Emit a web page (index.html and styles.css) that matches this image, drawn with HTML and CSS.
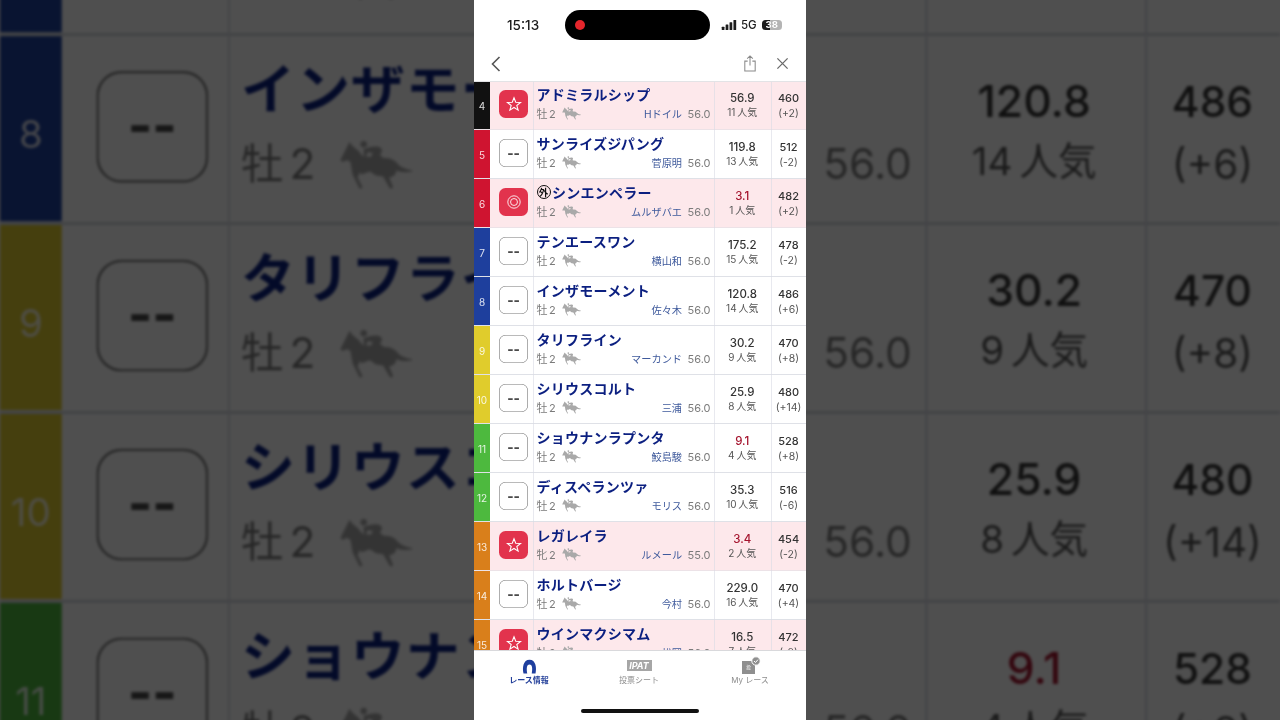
FILE: index.html
```html
<!DOCTYPE html>
<html lang="ja">
<head>
<meta charset="utf-8">
<title>レース情報</title>
<link rel="stylesheet" href="styles.css">
</head>
<body>
<svg class="defs" aria-hidden="true">
  <defs>
    <symbol id="horse" viewBox="0 0 72 48">
      <path d="M1 19 L8 5 L10 1 L13 5 Q19 9 23 15 L42 17 Q52 16 57 22 Q60 27 72 29 L72 30 Q62 32 56 29 Q56 35 49 36 L53 46 L50 47 L43 35 L36 34 L30 30 L22 33 L20 31 L18 36 L23 46 L20 47 L13 33 L11 21 Q7 17 4 21 Z"/>
      <circle cx="24" cy="3.4" r="3.2"/>
      <path d="M24 8 L31 6 Q42 4 42 10 L40 14 L44 17 L30 18 L33 12 L28 11 L26 16 L24 15 Z"/>
    </symbol>
    <symbol id="star" viewBox="0 0 24 24">
      <path d="M12 2.6 L14.6 9.4 L21.9 9.7 L16.2 14.2 L18.2 21.2 L12 17.2 L5.8 21.2 L7.8 14.2 L2.1 9.7 L9.4 9.4 Z" fill="none" stroke="currentColor" stroke-width="1.6" stroke-linejoin="miter"/>
    </symbol>
    <symbol id="circle2" viewBox="0 0 24 24">
      <circle cx="12" cy="12" r="9.3" fill="none" stroke="currentColor" stroke-width="1.3"/>
      <circle cx="12" cy="12" r="5.2" fill="none" stroke="currentColor" stroke-width="1.3"/>
    </symbol>
  </defs>
</svg>

<div class="backdrop-clip" aria-hidden="true">
  <div class="backdrop">
    <div class="row"><div class="band blue">7</div><div class="mark"><span class="box">--</span></div><div class="info"><div class="name">テンエースワン</div><div class="sub"><span class="sex">牡 2</span><svg class="horse"><use href="#horse"/></svg><span class="jockey">横山和</span><span class="kg">56.0</span></div></div><div class="odds"><b>175.2</b><span>15 人気</span></div><div class="weight"><b>478</b><span>(-2)</span></div></div>
    <div class="row"><div class="band blue">8</div><div class="mark"><span class="box">--</span></div><div class="info"><div class="name">インザモーメント</div><div class="sub"><span class="sex">牡 2</span><svg class="horse"><use href="#horse"/></svg><span class="jockey">佐々木</span><span class="kg">56.0</span></div></div><div class="odds"><b>120.8</b><span>14 人気</span></div><div class="weight"><b>486</b><span>(+6)</span></div></div>
    <div class="row"><div class="band yellow">9</div><div class="mark"><span class="box">--</span></div><div class="info"><div class="name">タリフライン</div><div class="sub"><span class="sex">牡 2</span><svg class="horse"><use href="#horse"/></svg><span class="jockey">マーカンド</span><span class="kg">56.0</span></div></div><div class="odds"><b>30.2</b><span>9 人気</span></div><div class="weight"><b>470</b><span>(+8)</span></div></div>
    <div class="row"><div class="band yellow">10</div><div class="mark"><span class="box">--</span></div><div class="info"><div class="name">シリウスコルト</div><div class="sub"><span class="sex">牡 2</span><svg class="horse"><use href="#horse"/></svg><span class="jockey">三浦</span><span class="kg">56.0</span></div></div><div class="odds"><b>25.9</b><span>8 人気</span></div><div class="weight"><b>480</b><span>(+14)</span></div></div>
    <div class="row"><div class="band green">11</div><div class="mark"><span class="box">--</span></div><div class="info"><div class="name">ショウナンラプンタ</div><div class="sub"><span class="sex">牡 2</span><svg class="horse"><use href="#horse"/></svg><span class="jockey">鮫島駿</span><span class="kg">56.0</span></div></div><div class="odds"><b class="hot">9.1</b><span>4 人気</span></div><div class="weight"><b>528</b><span>(+8)</span></div></div>
  </div>
</div>

<main class="phone">
  <header class="status">
    <span class="time">15:13</span>
    <div class="island"><span class="rec"></span></div>
    <div class="indicators">
      <svg class="signal" viewBox="0 0 16 11"><rect x="0" y="7.5" width="3" height="3.5" rx=".6"/><rect x="4.3" y="5" width="3" height="6" rx=".6"/><rect x="8.6" y="2.5" width="3" height="8.5" rx=".6"/><rect x="12.9" y="0" width="3" height="11" rx=".6"/></svg>
      <span class="net">5G</span>
      <span class="battery">38</span>
    </div>
  </header>
  <nav class="topbar">
    <svg class="chevron" viewBox="0 0 12 18"><path d="M9.5 2 L2.5 9 L9.5 16"/></svg>
    <div class="actions">
      <svg class="share" viewBox="0 0 14 18"><path d="M4.5 6.5 H1.5 V17 H12.5 V6.5 H9.5 M7 11 V1 M4 3.8 L7 1 L10 3.8"/></svg>
      <svg class="close" viewBox="0 0 14 14"><path d="M1.5 1.5 L12.5 12.5 M12.5 1.5 L1.5 12.5"/></svg>
    </div>
  </nav>
  <section class="list">
    <div class="rows">
    <div class="row pink"><div class="band black">4</div><div class="mark"><span class="box on"><svg class="glyph"><use href="#star"/></svg></span></div><div class="info"><div class="name">アドミラルシップ</div><div class="sub"><span class="sex">牡 2</span><svg class="horse"><use href="#horse"/></svg><span class="jockey">Hドイル</span><span class="kg">56.0</span></div></div><div class="odds"><b>56.9</b><span>11 人気</span></div><div class="weight"><b>460</b><span>(+2)</span></div></div>
    <div class="row"><div class="band red">5</div><div class="mark"><span class="box">--</span></div><div class="info"><div class="name">サンライズジパング</div><div class="sub"><span class="sex">牡 2</span><svg class="horse"><use href="#horse"/></svg><span class="jockey">菅原明</span><span class="kg">56.0</span></div></div><div class="odds"><b>119.8</b><span>13 人気</span></div><div class="weight"><b>512</b><span>(-2)</span></div></div>
    <div class="row pink"><div class="band red">6</div><div class="mark"><span class="box on"><svg class="glyph"><use href="#circle2"/></svg></span></div><div class="info"><div class="name"><span class="foreign">外</span>シンエンペラー</div><div class="sub"><span class="sex">牡 2</span><svg class="horse"><use href="#horse"/></svg><span class="jockey">ムルザバエ</span><span class="kg">56.0</span></div></div><div class="odds"><b class="hot">3.1</b><span>1 人気</span></div><div class="weight"><b>482</b><span>(+2)</span></div></div>
    <div class="row"><div class="band blue">7</div><div class="mark"><span class="box">--</span></div><div class="info"><div class="name">テンエースワン</div><div class="sub"><span class="sex">牡 2</span><svg class="horse"><use href="#horse"/></svg><span class="jockey">横山和</span><span class="kg">56.0</span></div></div><div class="odds"><b>175.2</b><span>15 人気</span></div><div class="weight"><b>478</b><span>(-2)</span></div></div>
    <div class="row"><div class="band blue">8</div><div class="mark"><span class="box">--</span></div><div class="info"><div class="name">インザモーメント</div><div class="sub"><span class="sex">牡 2</span><svg class="horse"><use href="#horse"/></svg><span class="jockey">佐々木</span><span class="kg">56.0</span></div></div><div class="odds"><b>120.8</b><span>14 人気</span></div><div class="weight"><b>486</b><span>(+6)</span></div></div>
    <div class="row"><div class="band yellow">9</div><div class="mark"><span class="box">--</span></div><div class="info"><div class="name">タリフライン</div><div class="sub"><span class="sex">牡 2</span><svg class="horse"><use href="#horse"/></svg><span class="jockey">マーカンド</span><span class="kg">56.0</span></div></div><div class="odds"><b>30.2</b><span>9 人気</span></div><div class="weight"><b>470</b><span>(+8)</span></div></div>
    <div class="row"><div class="band yellow">10</div><div class="mark"><span class="box">--</span></div><div class="info"><div class="name">シリウスコルト</div><div class="sub"><span class="sex">牡 2</span><svg class="horse"><use href="#horse"/></svg><span class="jockey">三浦</span><span class="kg">56.0</span></div></div><div class="odds"><b>25.9</b><span>8 人気</span></div><div class="weight"><b>480</b><span>(+14)</span></div></div>
    <div class="row"><div class="band green">11</div><div class="mark"><span class="box">--</span></div><div class="info"><div class="name">ショウナンラプンタ</div><div class="sub"><span class="sex">牡 2</span><svg class="horse"><use href="#horse"/></svg><span class="jockey">鮫島駿</span><span class="kg">56.0</span></div></div><div class="odds"><b class="hot">9.1</b><span>4 人気</span></div><div class="weight"><b>528</b><span>(+8)</span></div></div>
    <div class="row"><div class="band green">12</div><div class="mark"><span class="box">--</span></div><div class="info"><div class="name">ディスペランツァ</div><div class="sub"><span class="sex">牡 2</span><svg class="horse"><use href="#horse"/></svg><span class="jockey">モリス</span><span class="kg">56.0</span></div></div><div class="odds"><b>35.3</b><span>10 人気</span></div><div class="weight"><b>516</b><span>(-6)</span></div></div>
    <div class="row pink"><div class="band orange">13</div><div class="mark"><span class="box on"><svg class="glyph"><use href="#star"/></svg></span></div><div class="info"><div class="name">レガレイラ</div><div class="sub"><span class="sex">牝 2</span><svg class="horse"><use href="#horse"/></svg><span class="jockey">ルメール</span><span class="kg">55.0</span></div></div><div class="odds"><b class="hot">3.4</b><span>2 人気</span></div><div class="weight"><b>454</b><span>(-2)</span></div></div>
    <div class="row"><div class="band orange">14</div><div class="mark"><span class="box">--</span></div><div class="info"><div class="name">ホルトバージ</div><div class="sub"><span class="sex">牡 2</span><svg class="horse"><use href="#horse"/></svg><span class="jockey">今村</span><span class="kg">56.0</span></div></div><div class="odds"><b>229.0</b><span>16 人気</span></div><div class="weight"><b>470</b><span>(+4)</span></div></div>
    <div class="row pink"><div class="band orange">15</div><div class="mark"><span class="box on"><svg class="glyph"><use href="#star"/></svg></span></div><div class="info"><div class="name">ウインマクシマム</div><div class="sub"><span class="sex">牡 2</span><svg class="horse"><use href="#horse"/></svg><span class="jockey">松岡</span><span class="kg">56.0</span></div></div><div class="odds"><b>16.5</b><span>7 人気</span></div><div class="weight"><b>472</b><span>(-2)</span></div></div>
    </div>
  </section>
  <footer class="tabs">
    <div class="tab active">
      <svg class="tab-icon" viewBox="0 0 16 16"><path d="M1.6 15.5 C0.2 9.5 1.2 0.8 8 0.8 C14.8 0.8 15.8 9.5 14.4 15.5 H10.4 C11.2 11 11.4 5.8 8 5.8 C4.6 5.8 4.8 11 5.6 15.5 Z"/></svg>
      <span>レース情報</span>
    </div>
    <div class="tab">
      <span class="ipat">IPAT</span>
      <span>投票シート</span>
    </div>
    <div class="tab">
      <span class="my-icon"><span class="my-kanji">投</span><svg class="my-check" viewBox="0 0 10 10"><circle cx="5" cy="5" r="4.2"/><path d="M3 5 L4.5 6.5 L7 3.6"/></svg></span>
      <span>My レース</span>
    </div>
  </footer>
  <div class="home"><span class="home-bar"></span></div>
</main>
</body>
</html>
```

FILE: styles.css
```css
* { box-sizing: border-box; }

html, body {
  margin: 0;
  height: 720px;
  overflow: hidden;
}

body {
  display: flex;
  justify-content: center;
  background: #4f4f4f;
  font-family: Inter, "Noto Sans CJK JP", sans-serif;
}

.defs { position: absolute; width: 0; height: 0; }

/* enlarged, dimmed copy of the table behind the phone */
.backdrop-clip {
  position: absolute;
  inset: 0;
  overflow: hidden;
}

.backdrop {
  position: absolute;
  top: 0;
  left: 474px;
  width: 332px;
  height: 720px;
  padding-top: 227px;
  transform: scale(3.855);
  transform-origin: 166px 360px;
  filter: brightness(.31) blur(.35px);
  background: #fff;
}

.phone {
  position: relative;
  width: 332px;
  height: 720px;
  background: #fff;
  display: flex;
  flex-direction: column;
  overflow: hidden;
  filter: blur(.35px);
}

/* status bar */
.status {
  height: 44px;
  flex: none;
  display: flex;
  align-items: flex-start;
  padding-top: 10px;
}

.time {
  width: 91px;
  padding-left: 33px;
  font-size: 13.5px;
  font-weight: 500;
  line-height: 30px;
  color: #1c1c1c;
}

.island {
  width: 145px;
  height: 30px;
  border-radius: 15px;
  background: #000;
  display: flex;
  align-items: center;
  padding-left: 10px;
}

.rec {
  width: 10px;
  height: 10px;
  border-radius: 50%;
  background: #e5262c;
}

.indicators {
  display: flex;
  align-items: center;
  height: 30px;
  padding-left: 11px;
  color: #1c1c1c;
}

.signal { width: 16px; height: 10px; fill: #1c1c1c; }

.net { font-size: 11.5px; font-weight: 500; margin: 0 5px 0 4px; }

.battery {
  width: 20px;
  height: 10px;
  border-radius: 3.5px;
  background: linear-gradient(90deg, #1c1c1c 42%, #b4b4b4 42%);
  font-size: 9.5px;
  font-weight: 700;
  line-height: 10px;
  text-align: center;
  color: #fff;
}

/* top bar */
.topbar {
  height: 38px;
  flex: none;
  display: flex;
  align-items: center;
  justify-content: space-between;
  padding: 2px 17px 0 16px;
  border-bottom: 1px solid #e3e3e6;
}

.chevron { width: 12px; height: 18px; fill: none; stroke: #555; stroke-width: 1.6; }

.actions { display: flex; align-items: center; gap: 19px; }

.share { width: 14px; height: 17px; fill: none; stroke: #8a8a8a; stroke-width: 1.1; }

.close { width: 13px; height: 13px; fill: none; stroke: #6a6a6a; stroke-width: 1.4; }

/* rows */
.list {
  flex: 1;
  min-height: 0;
  overflow: hidden;
}

.rows { margin-top: -1.5px; }

.row {
  display: grid;
  grid-template-columns: 16px 42.5px 181px 57.5px 1fr;
  height: 49px;
  background: #fff;
  box-shadow: inset 0 -.8px 0 #d5d7e0;
}

.row.pink { background: #fde8eb; box-shadow: inset 0 -.8px 0 #e6dfe6; }

.band {
  display: flex;
  align-items: center;
  justify-content: center;
  margin-bottom: .8px;
  padding-top: 2px;
  font-size: 10px;
  color: rgba(255, 255, 255, .85);
}

.black { background: #111; }
.red { background: #cf1430; }
.blue { background: #1e3f9d; }
.yellow { background: #e0cc2c; }
.green { background: #4db93e; }
.orange { background: #d97f1b; }

.mark {
  display: flex;
  align-items: center;
  justify-content: center;
  padding: 0 0 2.4px 4.5px;
}

.box {
  width: 28.5px;
  height: 28.5px;
  border-radius: 6.5px;
  background: #fff;
  box-shadow: inset 0 0 0 .6px #777;
  display: flex;
  align-items: center;
  justify-content: center;
  font-size: 13.5px;
  font-weight: 800;
  color: #4a4a4a;
}

.box.on { background: #e2334d; box-shadow: none; color: #fff; }

.glyph { width: 16px; height: 16px; }

.info {
  box-shadow: inset .6px 0 0 #d9dbe4;
  padding: 3px 3px 0 4px;
  min-width: 0;
}

.name {
  display: flex;
  align-items: center;
  height: 20px;
  font-size: 14px;
  font-weight: 700;
  letter-spacing: .25px;
  color: #0b1f80;
  white-space: nowrap;
}

.foreign {
  width: 14px;
  height: 14px;
  margin-right: 1.5px;
  border: 1px solid #111;
  border-radius: 50%;
  display: flex;
  align-items: center;
  justify-content: center;
  font-size: 9.5px;
  letter-spacing: 0;
  color: #111;
}

.sub {
  display: flex;
  align-items: baseline;
  height: 16px;
  margin-top: 2px;
  font-size: 11px;
  line-height: 16px;
  color: #7b7b7b;
}

.sex { width: 25px; word-spacing: -1.5px; white-space: nowrap; }

.horse { align-self: center; width: 19px; height: 13px; fill: #a9a9a9; }

.jockey {
  margin-left: auto;
  font-size: 10.2px;
  color: #3f5a9c;
  white-space: nowrap;
}

.kg { margin-left: 5.5px; font-size: 11px; }

.odds, .weight {
  box-shadow: inset .6px 0 0 #d9dbe4;
  display: flex;
  flex-direction: column;
  align-items: center;
  justify-content: center;
  color: #333;
  white-space: nowrap;
}

.odds { padding-bottom: 1.25px; }

.weight { padding-top: .8px; }

.odds b, .weight b {
  font-weight: 500;
  font-size: 11.5px;
  line-height: 16px;
}

.odds span, .weight span {
  font-size: 10px;
  line-height: 14px;
  color: #555;
  word-spacing: -1px;
}

.odds span { margin-top: -.75px; }

.weight b { font-size: 11px; }

.weight span { margin-top: 1.3px; font-size: 10.5px; }

.odds b.hot { color: #a5142e; }

/* tab bar */
.tabs {
  height: 59px;
  flex: none;
  display: grid;
  grid-template-columns: 110px 110px 112px;
  border-top: 1px solid #d9d9dc;
  background: #fff;
  padding-top: 8px;
}

.tab {
  display: flex;
  flex-direction: column;
  align-items: center;
  gap: 1px;
  font-size: 8px;
  line-height: 11px;
  color: #8d8d8d;
}

.tab.active { color: #24409a; font-weight: 700; }

.tab-icon { width: 15px; height: 15px; fill: #1f3f9e; }

.ipat {
  width: 25px;
  height: 11px;
  margin: 1px 0 3px;
  background: #a6a6a6;
  color: #fff;
  font-size: 9px;
  font-weight: 700;
  font-style: italic;
  line-height: 11px;
  text-align: center;
}

.my-icon {
  position: relative;
  width: 13px;
  height: 13px;
  margin: 2px 3px 0 0;
  background: #8f8f8f;
  display: flex;
  align-items: center;
  justify-content: center;
}

.my-kanji { font-size: 5px; color: #fff; }

.my-check {
  position: absolute;
  top: -5px;
  right: -6px;
  width: 10px;
  height: 10px;
  stroke: #fff;
  stroke-width: 1;
  fill: none;
}

.my-check circle { fill: #8f8f8f; stroke: #fff; }

.home {
  flex: none;
  height: 11px;
  display: flex;
  justify-content: center;
  align-items: flex-start;
  background: #fff;
}

.home-bar {
  width: 118px;
  height: 4px;
  border-radius: 2px;
  background: #111;
}
```
